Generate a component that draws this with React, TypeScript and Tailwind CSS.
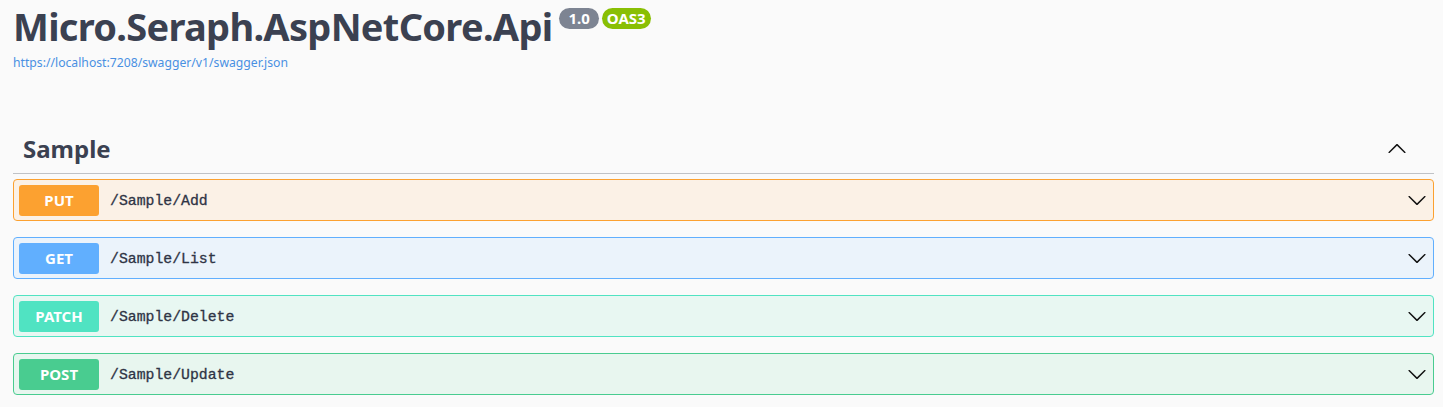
const ops = [
  { method: "PUT", path: "/Sample/Add", badge: "bg-[#fca130]", box: "border-[#fca130] bg-[#fbf1e6]" },
  { method: "GET", path: "/Sample/List", badge: "bg-[#61affe]", box: "border-[#61affe] bg-[#ebf3fb]" },
  { method: "PATCH", path: "/Sample/Delete", badge: "bg-[#50e3c2]", box: "border-[#50e3c2] bg-[#e8f7f2]" },
  { method: "POST", path: "/Sample/Update", badge: "bg-[#49cc90]", box: "border-[#49cc90] bg-[#e8f6ef]" },
];

const Arrow = ({ up = false }: { up?: boolean }) => (
  <svg
    viewBox="0 0 20 20"
    className={`size-5 fill-[#111] ${up ? "rotate-180" : ""}`}
    aria-hidden="true"
  >
    <path d="M17.418 6.109c.272-.268.709-.268.979 0s.271.701 0 .969l-7.908 7.83c-.27.268-.707.268-.979 0l-7.908-7.83c-.27-.268-.27-.701 0-.969.271-.268.709-.268.979 0L10 13.25l7.418-7.141z" />
  </svg>
);

const App = () => {
  return (
    <div className="min-h-screen bg-[#fafafa] font-['Noto_Sans',sans-serif] text-[#3b4151]">
      <div className="pl-[13px] pr-[9px] pt-[4px]">
        {/* info header */}
        <div className="flex items-start">
          <h2 className="text-[38px] font-bold leading-[44px] tracking-[-0.7px]">
            Micro.Seraph.AspNetCore.Api
          </h2>
          <div className="ml-[7px] mt-[4px] flex gap-[3px]">
            <span className="rounded-[57px] bg-[#7d8492] px-[9px] py-[1px] text-[15px] font-bold leading-[19px] text-white">
              1.0
            </span>
            <span className="rounded-[57px] bg-[#89bf04] px-[5px] py-[1px] text-[15px] font-bold leading-[19px] text-white">
              OAS3
            </span>
          </div>
        </div>
        <a className="mt-[7px] block text-[12.2px] leading-[16px] text-[#4990e2]" href="#">
          https://localhost:7208/swagger/v1/swagger.json
        </a>

        {/* tag section */}
        <div className="mt-[54px]">
          <div className="flex h-[49px] items-center justify-between border-b border-[#3b4151]/30 pl-[10px] pr-[27px]">
            <h3 className="text-[24px] font-bold">Sample</h3>
            <Arrow up />
          </div>
          <div className="mt-[5px] flex flex-col gap-[16px]">
            {ops.map((op) => (
              <div
                key={op.method}
                className={`flex h-[42px] items-center rounded-[4px] border px-[5px] ${op.box}`}
              >
                <span
                  className={`w-[80px] rounded-[3px] py-[6px] text-center text-[15px] font-bold leading-[19px] text-white ${op.badge}`}
                >
                  {op.method}
                </span>
                <span className="ml-[11px] mt-[2px] flex-1 font-['Liberation_Mono',monospace] text-[14.8px] text-[#2f3445] [-webkit-text-stroke:0.3px]">
                  {op.path}
                </span>
                <span className="mr-[1px]">
                  <Arrow />
                </span>
              </div>
            ))}
          </div>
        </div>
      </div>
    </div>
  );
};

export default App;
